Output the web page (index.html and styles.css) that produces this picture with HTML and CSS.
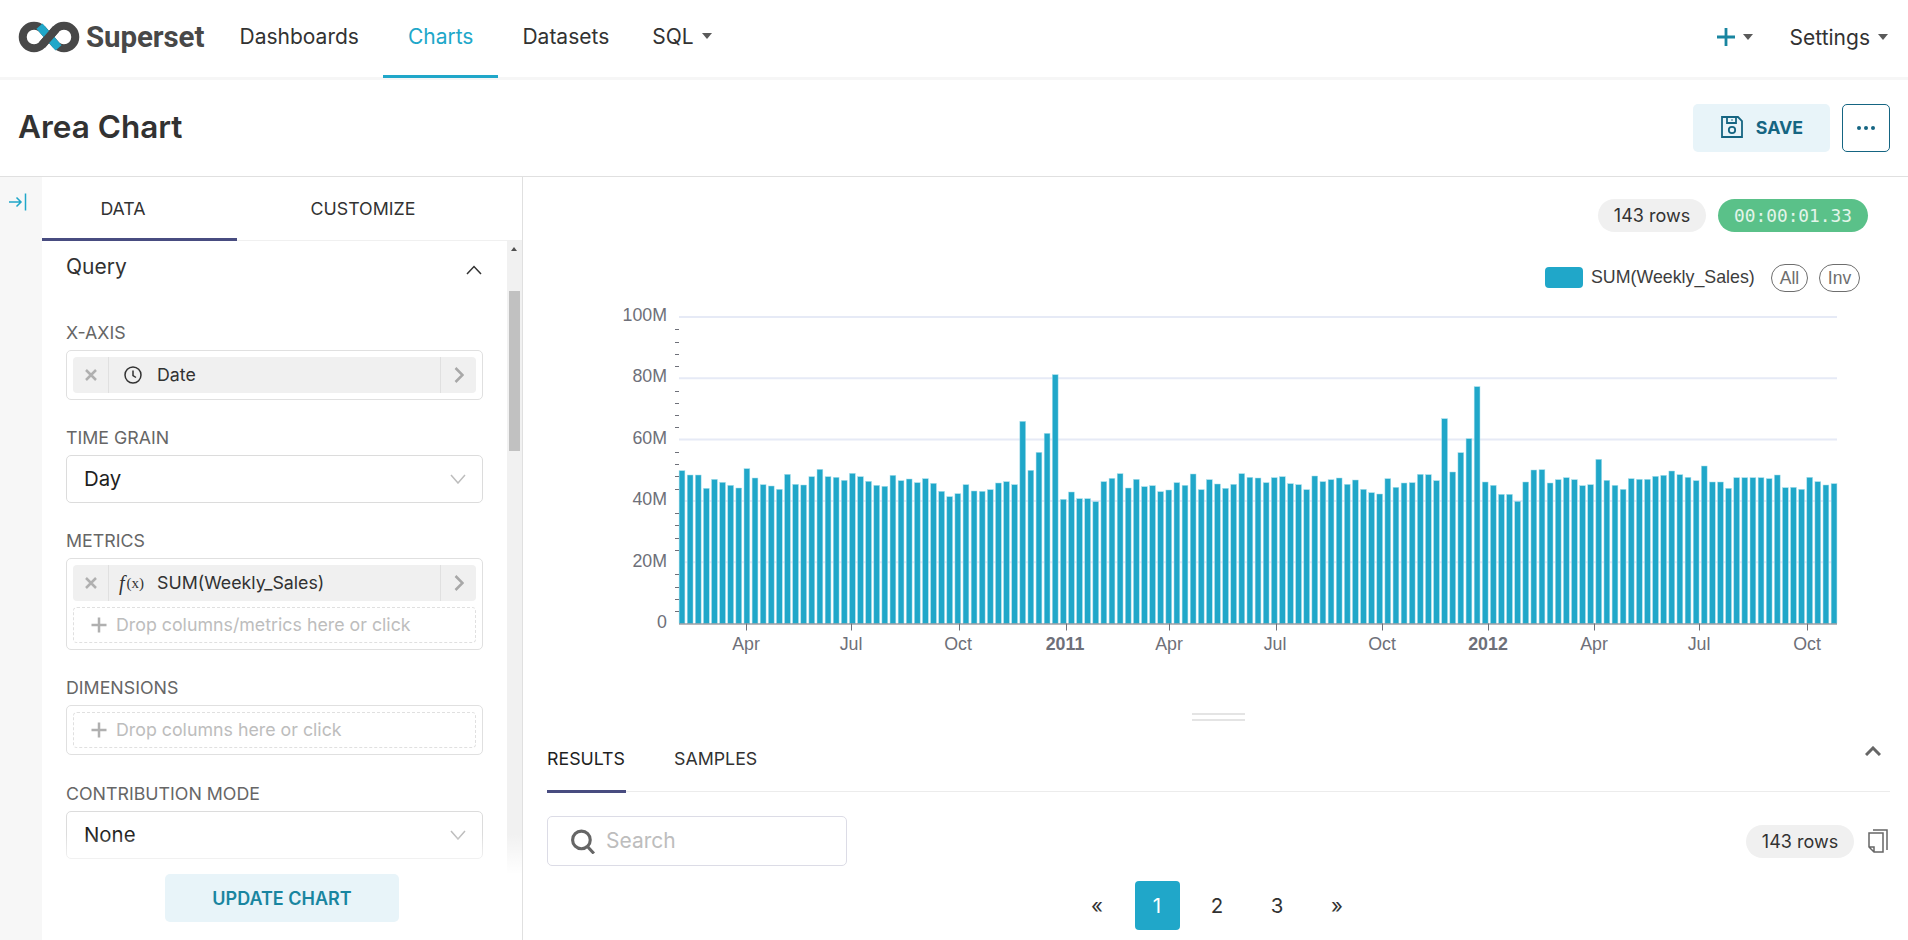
FILE: index.html
```html
<!DOCTYPE html>
<html lang="en">
<head>
<meta charset="utf-8">
<title>Area Chart</title>
<link rel="stylesheet" href="styles.css">
</head>
<body>
<header class="topbar">
  <a class="brand">
    <svg class="brand-mark" viewBox="0 0 62 32" width="62" height="32">
      <path class="loop" d="M24 8L38 24A11.3 11.3 0 1 0 38 8L24 24A11.3 11.3 0 1 1 24 8Z"/>
      <path class="loop-accent" d="M21.5 5.2L29.5 14.4M32.5 17.6L40.5 26.8"/>
      <path class="loop" d="M38 8L24 24"/>
    </svg>
    <span class="brand-name">Superset</span>
  </a>
  <nav class="menu">
    <a class="menu-item">Dashboards</a>
    <a class="menu-item active">Charts</a>
    <a class="menu-item">Datasets</a>
    <a class="menu-item menu-sql">SQL<i class="caret"></i></a>
  </nav>
  <div class="menu-right">
    <a class="menu-plus">
      <svg viewBox="0 0 18 18" width="18" height="18"><path class="plus" d="M9 0V18M0 9H18"/></svg>
      <i class="caret"></i>
    </a>
    <a class="menu-settings">Settings<i class="caret"></i></a>
  </div>
</header>

<section class="titlebar">
  <h1>Area Chart</h1>
  <div class="title-actions">
    <button class="btn-save">
      <svg viewBox="0 0 22 22" width="22" height="22"><path class="save-ic" d="M1 1H17L21 5V21H1ZM6 1V7H15V1M11 3.5V4.500"/><circle class="save-ic" cx="11" cy="14" r="3.200"/></svg>
      SAVE
    </button>
    <button class="btn-more"><i></i><i></i><i></i></button>
  </div>
</section>

<main class="workspace">
  <aside class="rail">
    <svg viewBox="0 0 18 18" width="18" height="18"><path class="rail-ic" d="M0 9H12M7.500 4.500L12 9L7.500 13.500M16.500 0.500V17.500"/></svg>
  </aside>

  <section class="sidebar">
    <div class="side-tabs">
      <a class="side-tab active">DATA</a>
      <a class="side-tab">CUSTOMIZE</a>
    </div>
    <div class="side-scroll">
      <form class="controls">
        <div class="section-head">
          <span>Query</span>
          <svg viewBox="0 0 16 10" width="16" height="10"><path class="chev-up" d="M1 9L8 1.500L15 9"/></svg>
        </div>

        <div class="field">
          <label>X-AXIS</label>
          <div class="dropbox">
            <div class="chip">
              <span class="chip-x"><svg viewBox="0 0 12 12" width="12" height="12"><path d="M1 1L11 11M11 1L1 11"/></svg></span>
              <span class="chip-type"><svg viewBox="0 0 18 18" width="18" height="18"><circle cx="9" cy="9" r="8"/><path d="M9 4.500V9.500L12 11.500"/></svg></span>
              <span class="chip-name">Date</span>
              <span class="chip-more"><svg viewBox="0 0 10 16" width="10" height="16"><path d="M1.500 1L8.500 8L1.500 15"/></svg></span>
            </div>
          </div>
        </div>

        <div class="field">
          <label>TIME GRAIN</label>
          <div class="select">
            <span>Day</span>
            <svg viewBox="0 0 16 10" width="16" height="10"><path d="M1 1L8 9L15 1"/></svg>
          </div>
        </div>

        <div class="field">
          <label>METRICS</label>
          <div class="dropbox">
            <div class="chip">
              <span class="chip-x"><svg viewBox="0 0 12 12" width="12" height="12"><path d="M1 1L11 11M11 1L1 11"/></svg></span>
              <span class="chip-type fx"><em>f</em><small>(x)</small></span>
              <span class="chip-name">SUM(Weekly_Sales)</span>
              <span class="chip-more"><svg viewBox="0 0 10 16" width="10" height="16"><path d="M1.500 1L8.500 8L1.500 15"/></svg></span>
            </div>
            <div class="drop-hint"><svg viewBox="0 0 16 16" width="16" height="16"><path d="M8 0.500V15.500M0.500 8H15.500"/></svg><span>Drop columns/metrics here or click</span></div>
          </div>
        </div>

        <div class="field">
          <label>DIMENSIONS</label>
          <div class="dropbox">
            <div class="drop-hint"><svg viewBox="0 0 16 16" width="16" height="16"><path d="M8 0.500V15.500M0.500 8H15.500"/></svg><span>Drop columns here or click</span></div>
          </div>
        </div>

        <div class="field">
          <label>CONTRIBUTION MODE</label>
          <div class="select">
            <span>None</span>
            <svg viewBox="0 0 16 10" width="16" height="10"><path d="M1 1L8 9L15 1"/></svg>
          </div>
        </div>
      </form>
      <div class="scrollbar">
        <i class="scroll-up"></i>
        <i class="scroll-thumb"></i>
      </div>
      <div class="scroll-fade"></div>
    </div>
    <div class="side-footer">
      <button class="btn-update">UPDATE CHART</button>
    </div>
  </section>

  <section class="stage">
    <div class="stats">
      <span class="pill">143 rows</span>
      <span class="pill timer">00:00:01.33</span>
    </div>

    <svg id="chart" class="chart" viewBox="523 232 1385 458" width="1385" height="458">
      <g id="grid"></g>
      <g id="bars"></g>
      <g id="ticks"></g>
      <rect class="legend-swatch" x="1545" y="267" width="38" height="21" rx="4"/>
      <text class="legend-text" x="1591" y="283">SUM(Weekly_Sales)</text>
      <rect class="legend-btn" x="1771.500" y="264.500" width="36" height="27" rx="13.500"/>
      <text class="legend-btn-text" x="1789.500" y="283.500">All</text>
      <rect class="legend-btn" x="1819.500" y="264.500" width="40" height="27" rx="13.500"/>
      <text class="legend-btn-text" x="1839.500" y="283.500">Inv</text>
      <g class="y-labels">
        <text x="667" y="321">100M</text>
        <text x="667" y="382">80M</text>
        <text x="667" y="444">60M</text>
        <text x="667" y="505">40M</text>
        <text x="667" y="567">20M</text>
        <text x="667" y="628">0</text>
      </g>
      <g class="x-labels">
        <text x="746" y="650">Apr</text>
        <text x="851" y="650">Jul</text>
        <text x="958" y="650">Oct</text>
        <text class="year" x="1065" y="650">2011</text>
        <text x="1169" y="650">Apr</text>
        <text x="1275" y="650">Jul</text>
        <text x="1382" y="650">Oct</text>
        <text class="year" x="1488" y="650">2012</text>
        <text x="1594" y="650">Apr</text>
        <text x="1699" y="650">Jul</text>
        <text x="1807" y="650">Oct</text>
      </g>
    </svg>

    <div class="results">
      <div class="resize-handle"></div>
      <div class="result-tabs">
        <a class="result-tab active">RESULTS</a>
        <a class="result-tab">SAMPLES</a>
        <svg class="collapse" viewBox="0 0 16 10" width="16" height="10"><path d="M1 9L8 2L15 9"/></svg>
      </div>
      <div class="result-tools">
        <div class="search">
          <svg viewBox="0 0 26 24" width="27" height="25"><circle cx="11" cy="10.500" r="8.500"/><path d="M17 17L23 23.500"/></svg>
          <span>Search</span>
        </div>
        <div class="result-meta">
          <span class="pill">143 rows</span>
          <svg viewBox="0 0 20 24" width="20" height="24"><path class="copy-back" d="M5 1H19V21"/><path class="copy-front" d="M1 4H15V23H6L1 18ZM1 18H6V23"/></svg>
        </div>
      </div>
      <div class="pager">
        <a>«</a>
        <a class="current">1</a>
        <a>2</a>
        <a>3</a>
        <a>»</a>
      </div>
    </div>
  </section>
</main>
<script src="chart.js"></script>
</body>
</html>
```
FILE: styles.css
```css
* { box-sizing: border-box; }
html, body { margin: 0; height: 100%; }
body {
  width: 1908px;
  height: 940px;
  overflow: hidden;
  background: #fff;
  color: #323232;
  font-family: Inter, "Liberation Sans", sans-serif;
}
a { color: inherit; text-decoration: none; }
button { font-family: inherit; cursor: pointer; }

/* top navigation */
.topbar {
  display: flex;
  align-items: stretch;
  height: 80px;
  padding: 0 20px 3px 18px;
  border-bottom: 3px solid #f6f6f6;
}
.brand { display: flex; align-items: center; gap: 6px; width: 197px; }
.brand-mark { display: block; margin-top: -1px; }
.loop { fill: none; stroke: #484848; stroke-width: 8; }
.loop-accent { fill: none; stroke: #20a7c9; stroke-width: 8; }
.brand-name { font: 700 29.500px Roboto, sans-serif; color: #484848; letter-spacing: -0.1px; }
.menu { display: flex; }
.menu-item {
  display: flex;
  align-items: center;
  padding: 0 24.500px 3px;
  height: 78px;
  font-size: 21px;
  border-bottom: 3px solid transparent;
  position: relative;
}
.menu-item.active { color: #20a7c9; border-bottom-color: #20a7c9; }
.menu-sql { margin-left: -6px; }
.caret {
  display: inline-block;
  width: 0;
  height: 0;
  margin-left: 8px;
  border-left: 5px solid transparent;
  border-right: 5px solid transparent;
  border-top: 6.500px solid #5a5a5a;
}
.menu-right { margin-left: auto; display: flex; align-items: center; }
.menu-plus { display: flex; align-items: center; margin-right: 37px; }
.plus { stroke: #1985a0; stroke-width: 2.800; fill: none; }
.menu-settings { font-size: 21px; display: flex; align-items: center; }

/* title row */
.titlebar {
  display: flex;
  align-items: center;
  justify-content: space-between;
  height: 97px;
  padding: 0 18px;
  border-bottom: 1px solid #e0e0e0;
}
h1 { margin: -4px 0 0; font-size: 31.500px; font-weight: 600; }
.title-actions { display: flex; gap: 12px; margin-top: -1px; }
.btn-save {
  display: flex;
  align-items: center;
  justify-content: center;
  gap: 13px;
  width: 137px;
  height: 48px;
  border: 0;
  border-radius: 5px;
  background: #e8f4f9;
  color: #156582;
  font-size: 17.800px;
  font-weight: 700;
  padding: 0 0 1px 1px;
}
.save-ic { fill: none; stroke: #156582; stroke-width: 1.800; }
.btn-more {
  display: flex;
  align-items: center;
  justify-content: center;
  gap: 3px;
  width: 48px;
  height: 48px;
  padding: 0;
  border: 1px solid #156582;
  border-radius: 5px;
  background: #fff;
}
.btn-more i { width: 4px; height: 4px; border-radius: 50%; background: #156582; }

/* workspace */
.workspace { display: flex; height: 763px; }
.rail { width: 42px; background: #f7f7f7; padding: 16px 0 0 9px; flex: none; }
.rail svg { display: block; }
.rail-ic { fill: none; stroke: #20a7c9; stroke-width: 1.500; }
.sidebar { width: 481px; flex: none; border-right: 1px solid #e0e0e0; display: flex; flex-direction: column; }
.side-tabs { display: flex; height: 64px; border-bottom: 1px solid #f0f0f0; flex: none; }
.side-tab {
  display: flex;
  align-items: center;
  justify-content: center;
  height: 64px;
  padding-top: 1px;
  font-size: 17.800px;
  border-bottom: 3px solid transparent;
}
.side-tab:first-child { width: 195px; padding-right: 33px; }
.side-tab:last-child { width: 252px; padding-right: 0; }
.side-tab.active { border-bottom-color: #484c80; }

.side-scroll { display: flex; height: 633px; overflow: hidden; position: relative; flex: none; }
.controls { width: 465px; padding: 0 24px; flex: none; }
.section-head {
  display: flex;
  align-items: center;
  justify-content: space-between;
  height: 54px;
  padding: 0 1px 4px 0;
  font-size: 21px;
}
.section-head svg { margin-top: 8px; }
.chev-up { fill: none; stroke: #323232; stroke-width: 1.500; }
.field { margin-top: 27px; }
.field:last-child { margin-top: 28px; }
.field label { display: block; height: 21px; margin-bottom: 7px; line-height: 21px; font-size: 17.800px; color: #666; }
.dropbox {
  display: flex;
  flex-direction: column;
  gap: 6px;
  padding: 6px;
  border: 1px solid #e0e0e0;
  border-radius: 5px;
}
.chip {
  display: flex;
  align-items: center;
  height: 36px;
  background: #f0f0f0;
  border-radius: 4px;
  font-size: 17.800px;
}
.chip-x {
  display: flex;
  align-items: center;
  justify-content: center;
  width: 36px;
  height: 100%;
  border-right: 1px solid #e0e0e0;
}
.chip-x path { fill: none; stroke: #b0b0b0; stroke-width: 2.500; }
.chip-type { display: flex; align-items: center; justify-content: center; width: 48px; height: 100%; flex: none; }
.chip-type svg { fill: none; stroke: #323232; stroke-width: 1.500; }
.fx { font-family: "Liberation Serif", serif; font-size: 15px; align-items: center; padding-right: 3px; }
.fx em { font-size: 20px; margin-right: 2px; }
.fx small { font-size: 15px; }
.chip-name { flex: 1; padding-bottom: 1px; }
.chip-more {
  display: flex;
  align-items: center;
  justify-content: center;
  width: 36px;
  height: 100%;
  border-left: 1px solid #e0e0e0;
}
.chip-more path { fill: none; stroke: #a8a8a8; stroke-width: 2.500; }
.drop-hint {
  display: flex;
  align-items: center;
  gap: 9px;
  height: 36px;
  padding-left: 17px;
  border: 1px dashed #e0e0e0;
  border-radius: 4px;
  color: #bdbdbd;
  font-size: 17.800px;
}
.drop-hint span { padding-bottom: 2px; }
.drop-hint path { fill: none; stroke: #b0b0b0; stroke-width: 2.500; }
.select {
  display: flex;
  align-items: center;
  justify-content: space-between;
  height: 48px;
  padding: 0 16px 0 17px;
  border: 1px solid #dcdcdc;
  border-radius: 5px;
  font-size: 20.400px;
  color: #1f1f1f;
}
.select span { padding-bottom: 2px; }
.select path { fill: none; stroke: #bdbdbd; stroke-width: 1.500; }

.scrollbar { width: 15px; flex: none; background: #f1f1f1; position: relative; }
.scroll-up {
  position: absolute;
  left: 4px;
  top: 6px;
  border-left: 3.500px solid transparent;
  border-right: 3.500px solid transparent;
  border-bottom: 4px solid #505050;
}
.scroll-thumb { position: absolute; left: 2px; right: 2px; top: 50px; height: 160px; background: #c1c1c1; }
.scroll-fade {
  position: absolute;
  left: 0;
  right: 0;
  bottom: 0;
  height: 40px;
  background: linear-gradient(rgba(255,255,255,0), #fff);
}
.side-footer { display: flex; justify-content: flex-start; padding: 0 0 0 123px; }
.btn-update {
  width: 234px;
  height: 48px;
  border: 0;
  border-radius: 5px;
  background: #e8f4f9;
  color: #1985a0;
  font-size: 18px;
  font-weight: 600;
}

/* right stage */
.stage { flex: 1; min-width: 0; display: flex; flex-direction: column; }
.stats { display: flex; justify-content: flex-end; gap: 12px; padding: 22px 40px 0 0; flex: none; }
.pill {
  display: inline-flex;
  align-items: center;
  justify-content: center;
  width: 108px;
  height: 33px;
  border-radius: 17px;
  background: #f0f0f0;
  font-size: 18px;
  color: #323232;
}
.timer {
  width: 150px;
  background: #5ac189;
  color: #e3f5ea;
  font-family: "DejaVu Sans Mono", monospace;
  font-size: 17.800px;
}
.chart { display: block; flex: none; }
.gridline { stroke: #e6eaf6; stroke-width: 2; }
.bar { fill: #20a7c9; stroke: #a9dfec; stroke-width: 0.500; }
.axis { stroke: #6e7079; stroke-width: 1; }
.minor { stroke: #6e7079; stroke-width: 1; }
.legend-swatch { fill: #20a7c9; }
.legend-text { font: 17.800px "Liberation Sans", sans-serif; fill: #3d3d3d; }
.legend-btn { fill: #fff; stroke: #6e6e6e; stroke-width: 1; }
.legend-btn-text { font: 17.500px "Liberation Sans", sans-serif; fill: #6e6e6e; text-anchor: middle; }
.y-labels text { font: 17.800px "Liberation Sans", sans-serif; fill: #6e7079; text-anchor: end; }
.x-labels text { font: 17.800px "Liberation Sans", sans-serif; fill: #6e7079; text-anchor: middle; }
.x-labels .year { font-weight: 700; }

.results { flex: 1; padding: 0 18px 0 24px; }
.resize-handle { width: 53px; height: 8px; margin: 23px auto 0; border-top: 2px solid #e4e4e4; border-bottom: 2px solid #e4e4e4; }
.result-tabs {
  display: flex;
  align-items: center;
  gap: 49px;
  height: 71px;
  border-bottom: 1px solid #ececec;
  position: relative;
}
.result-tab {
  display: flex;
  align-items: center;
  height: 72px;
  padding-top: 7px;
  font-size: 17.800px;
  border-bottom: 3px solid transparent;
  margin-bottom: -1px;
}
.result-tab.active { border-bottom-color: #484c80; color: #1f1f1f; padding-right: 1px; margin-right: -1px; }
.collapse { margin-left: auto; margin-right: 9px; margin-top: -11px; }
.collapse path { fill: none; stroke: #666; stroke-width: 3; }
.result-tools { display: flex; align-items: center; justify-content: space-between; height: 50px; margin-top: 24px; }
.search {
  display: flex;
  align-items: center;
  gap: 9px;
  width: 300px;
  height: 50px;
  padding-left: 22px;
  border: 1px solid #dcdce6;
  border-radius: 5px;
  color: #bdbdbd;
  font-size: 21px;
}
.search span { padding-bottom: 2px; }
.search circle, .search path { fill: none; stroke: #666; stroke-width: 3; }
.result-meta { display: flex; align-items: center; gap: 14px; padding-right: 2px; }
.copy-back, .copy-front { fill: none; stroke: #666; stroke-width: 1.500; }
.pager { display: flex; justify-content: center; gap: 15px; margin-top: 15px; padding-right: 3px; }
.pager a {
  display: flex;
  align-items: center;
  justify-content: center;
  width: 45px;
  height: 49px;
  border-radius: 4px;
  font-size: 20.400px;
}
.pager .current { background: #20a7c9; color: #fff; }
```
FILE: chart.js
```javascript
// Bar tops traced from the weekly-sales series, as offsets in thirds of a pixel from y=300.
var tops = [512,525,525,565,538,547,556,564,506,534,554,558,568,523,553,555,530,508,530,532,541,520,530,544,556,559,526,542,537,548,536,550,574,590,581,554,573,574,569,549,545,554,364,511,457,400,224,598,576,596,596,605,
545,535,521,564,538,560,557,575,570,548,556,522,569,539,552,565,553,521,532,534,548,533,530,551,554,569,528,545,539,534,553,540,568,578,582,536,562,549,548,523,524,542,356,516,458,416,260,546,556,583,583,604,546,510,509,549,539,533,539,557,554,478,
541,556,568,536,538,538,529,526,513,524,532,542,498,546,546,565,533,533,533,533,536,525,563,562,568,532,545,555,551];

var NS = 'http://www.w3.org/2000/svg';
function add(parent, tag, attrs) {
  var el = document.createElementNS(NS, tag);
  for (var k in attrs) el.setAttribute(k, attrs[k]);
  document.getElementById(parent).appendChild(el);
}

var BASE = 623.5, LEFT = 679, RIGHT = 1837, STEP = 61.3;

for (var g = 1; g <= 5; g++) {
  var gy = BASE - g * STEP;
  add('grid', 'line', { 'class': 'gridline', x1: LEFT, x2: RIGHT, y1: gy, y2: gy });
}

tops.forEach(function (t, i) {
  var top = 300 + t / 3;
  var cx = 682 + i * 8.113;
  add('bars', 'rect', { 'class': 'bar', x: cx - 2.9, y: top, width: 5.8, height: BASE - top });
});

add('ticks', 'line', { 'class': 'axis', x1: LEFT, x2: RIGHT, y1: BASE + 0.5, y2: BASE + 0.5 });
[746, 851, 959, 1066, 1169, 1276, 1382, 1488, 1594, 1699, 1807].forEach(function (x) {
  add('ticks', 'line', { 'class': 'axis', x1: x + 0.5, x2: x + 0.5, y1: BASE, y2: BASE + 7 });
});
for (var m = 1; m < 25; m++) {
  if (m % 5 === 0) continue;
  var my = Math.round(BASE - m * STEP / 5) + 0.5;
  add('ticks', 'line', { 'class': 'minor', x1: LEFT - 4, x2: LEFT, y1: my, y2: my });
}
```
